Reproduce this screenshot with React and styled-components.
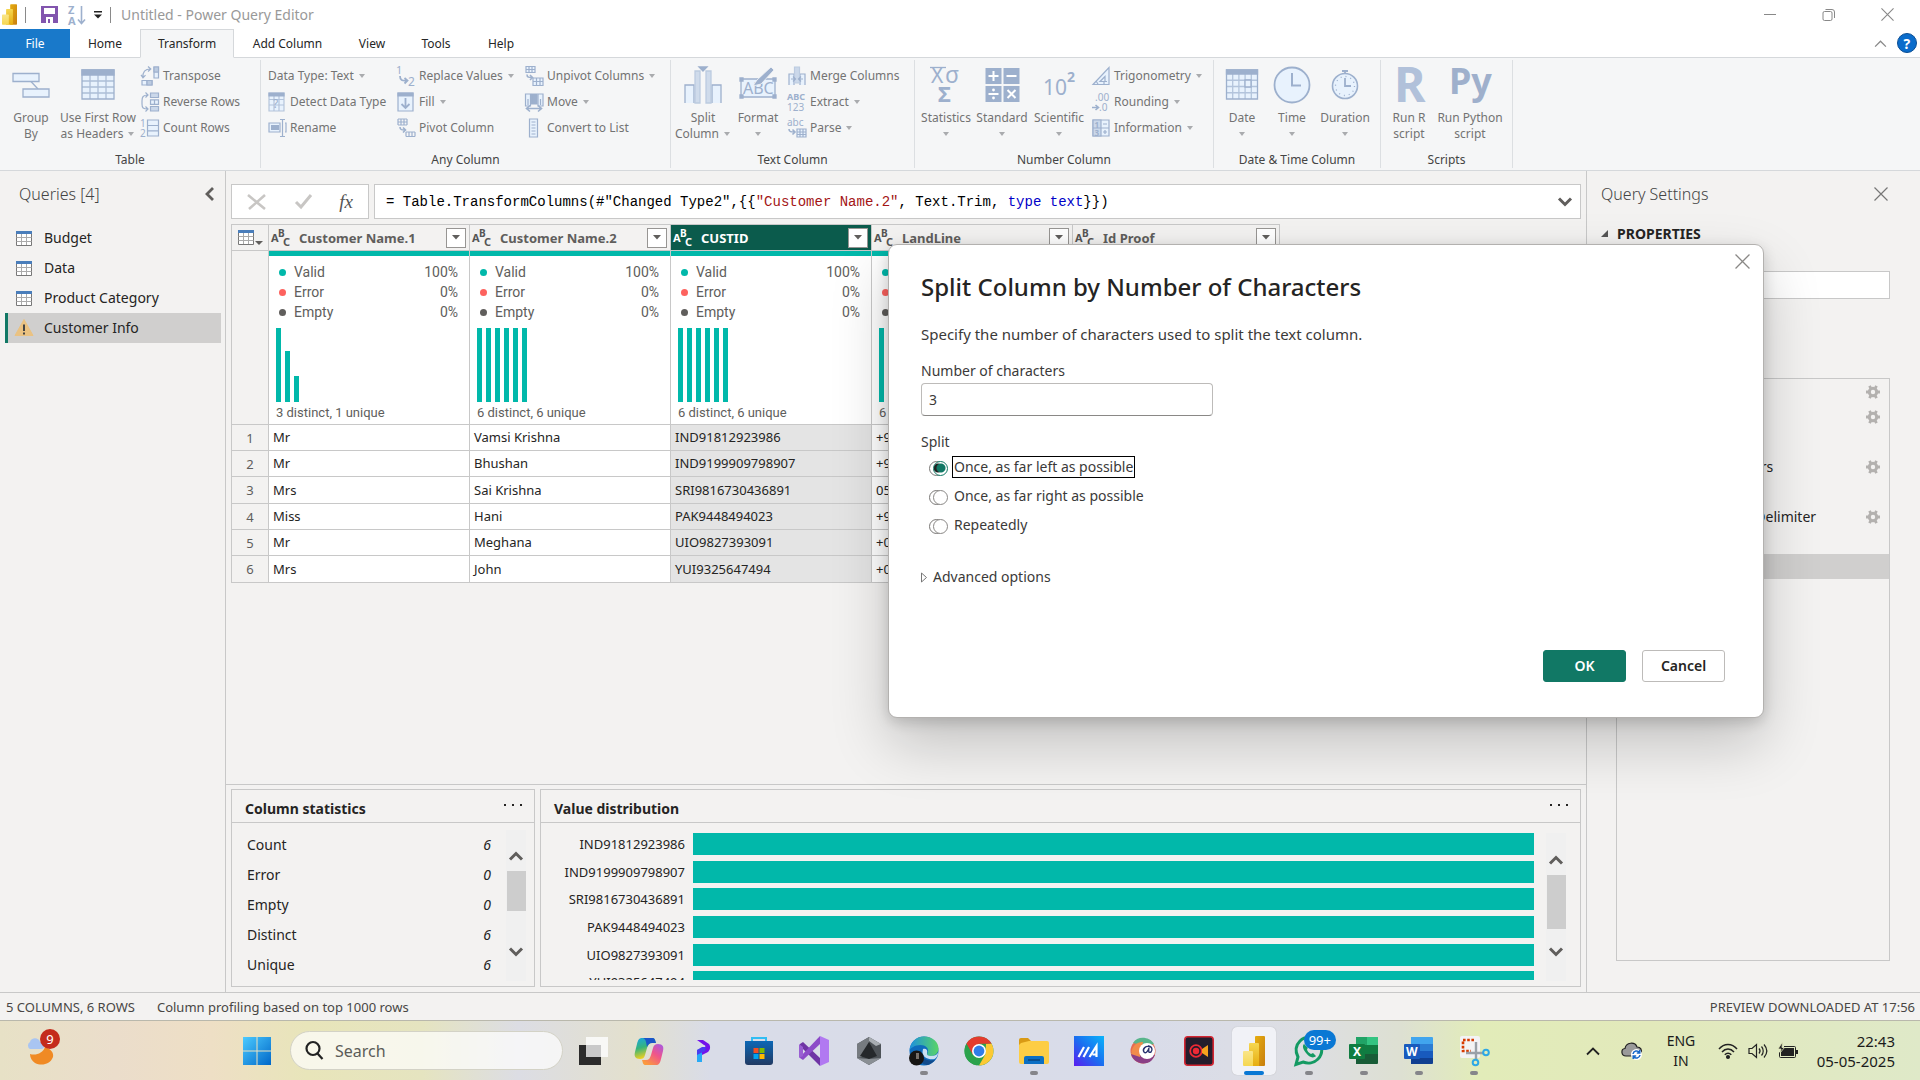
import React from "react";
import styled, { createGlobalStyle, css } from "styled-components";

const GlobalStyle = createGlobalStyle`
  *, *::before, *::after { box-sizing: border-box; }
  body { margin: 0; background: #f3f2f1; color: #252423; font: 14px/20px "Noto Sans", "Open Sans", sans-serif; }
  button, input { font: inherit; color: inherit; }
  button { border: 0; padding: 0; background: none; cursor: pointer; }
  svg { display: block; flex: none; overflow: visible; }
  ul { list-style: none; margin: 0; padding: 0; }
  h1, h2, h3, p { margin: 0; font: inherit; }
`;

const line = "#c8c8c8";
const teal = "#01b8aa";
const green = "#117865";
const ink = "#9db0cd";
const wash = "#e8f2fd";

/* ---------- shell ---------- */

const Shell = styled.div`
  position: relative;
  display: flex;
  flex-direction: column;
  min-height: 100vh;
  overflow: hidden;
`;

const TitleBar = styled.header`
  display: flex;
  align-items: center;
  height: 29px;
  padding: 0 26px 0 2px;
  background: #fff;
`;

const QuickAccess = styled.div`
  display: flex;
  align-items: center;
`;

const Divider = styled.span`
  width: 1px;
  height: 16px;
  margin: 0 ${(p) => p.$after}px 0 8px;
  background: #8a8a8a;
`;

const QuickButton = styled.button`
  margin-right: 10px;
`;

const WindowTitle = styled.h1`
  color: #999;
`;

const WindowButtons = styled.div`
  display: flex;
  gap: 45px;
  margin-left: auto;
`;

const TabBar = styled.nav`
  display: flex;
  align-items: stretch;
  height: 29px;
  padding-right: 3px;
  background: #fff;
  border-bottom: 1px solid #d5d8db;
  font-size: 12px;
`;

const Tab = styled.button`
  width: ${(p) => p.$width}px;
  height: 29px;
  color: #262626;
  border: 1px solid transparent;
  ${(p) => p.$file && css`background: #1979ca; color: #fff;`}
  ${(p) => p.$active && css`
    background: #f5f6f7;
    border-color: #d5d8db #d5d8db #f5f6f7;
  `}
`;

const TabTools = styled.div`
  display: flex;
  align-items: center;
  gap: 10px;
  margin-left: auto;
`;

/* ---------- ribbon ---------- */

const Ribbon = styled.div`
  display: flex;
  height: 113px;
  padding: 2px 0;
  background: #f5f6f7;
  border-bottom: 1px solid #d5d8db;
  color: #737373;
  font-size: 12px;
`;

const Group = styled.section`
  display: flex;
  flex-direction: column;
  width: ${(p) => p.$width}px;
  height: 108px;
  border-right: 1px solid #dcdfe2;
`;

const GroupBody = styled.div`
  display: flex;
  flex: 1;
  padding: 3px 0 0 3px;
`;

const GroupLabel = styled.h2`
  color: #444;
  line-height: 16px;
  text-align: center;
`;

const BigButton = styled.button`
  display: flex;
  flex-direction: column;
  align-items: center;
  width: ${(p) => p.$width}px;
  padding-top: 1px;
  line-height: 16px;
  white-space: nowrap;
`;

const BigIcon = styled.span`
  height: 46px;
`;

const CaretLine = styled.span`
  display: flex;
  align-items: center;
  justify-content: center;
  gap: 4px;
  min-height: 16px;
`;

const SmallColumn = styled.div`
  display: flex;
  flex-direction: column;
  width: ${(p) => p.$width}px;
  margin-left: 4px;
`;

const SmallButton = styled.button`
  display: flex;
  align-items: center;
  gap: 4px;
  height: 26px;
  white-space: nowrap;
`;

const Caret = () => (
  <svg width="8" height="5" viewBox="0 0 8 5"><path d="M1 0h6L4 4z" fill="#a9abae" /></svg>
);

const S = ({ children, w = 18 }) => (
  <svg width={w} height="20" viewBox={`0 0 ${w} 20`} fill="none" stroke={ink} strokeWidth="1.2" aria-hidden="true">{children}</svg>
);
const B = ({ children }) => (
  <svg width="40" height="40" viewBox="0 0 40 40" fill={wash} stroke={ink} strokeWidth="1.3" aria-hidden="true">{children}</svg>
);
const Glyph = ({ x, y, size, bold, children, fill = ink }) => (
  <text x={x} y={y} fontSize={size} fontWeight={bold ? 700 : 400} fill={fill} stroke="none" fontFamily="Noto Sans, sans-serif">{children}</text>
);

const small = {
  transpose: <S><path d="M13 1h4.500v11H13zM13 6h4.500M1 14.500h10V19H1zM6 14.500V19" fill={wash} /><path d="M13 1h4.500v5H13zM6 14.500h5V19H6z" fill="#bccbe0" /><path d="M2 11.500C1.500 6 4 3 9.500 3M7 .5 9.800 3 7 5.500M0 8.800l2 3 2.500-2.600" /></S>,
  reverse: <S><path d="M9.500 1h8v4.500h-8zM9.500 14.500h8V19h-8z" fill="#cbd8ea" /><path d="M9.500 7.800h8v4.500h-8zM13.500 7.800v4.500" fill={wash} /><path d="M7 3C2 3 1 5 1 9v3c0 4 1 5 6 5M4.500 .5 7 3 4.500 5.500M4.500 14.500 7 17l-2.500 2.500" /></S>,
  count: <S><path d="M6.500 2h11v16h-11zM6.500 7.500h11M6.500 12.800h11" fill={wash} /><Glyph x="-1" y="8.500" size="10">1</Glyph><Glyph x="-1" y="19" size="10">2</Glyph></S>,
  detect: <S><path d="M1 1h15v18H1zM1 7.500h15M1 13h15M6 3v16M11 3v16" fill={wash} strokeOpacity=".7" /><path d="M1 1h15v3H1z" fill={ink} /><Glyph x="5" y="16" size="12">?</Glyph></S>,
  rename: <S><path d="M1 5h11v9H1z" fill={wash} /><path d="M3 7h8v5H3z" fill={ink} stroke="none" /><path d="M12 1.500h5M12 18.500h5M14.500 1.500v17M17 5h1v9h-1" /></S>,
  replace: <S><Glyph x="-1" y="8" size="11">1</Glyph><Glyph x="11" y="19.500" size="12">2</Glyph><path d="M3 10c0 4 2 5 7 4.500M7.500 12l3 2.500-3 3" strokeWidth="1.800" /></S>,
  fill: <S><path d="M1 1h15v18H1z" fill={wash} /><path d="M1 1h15v3H1z" fill={ink} /><path d="M8.500 6v10M4.500 12l4 4 4-4" strokeWidth="1.800" /></S>,
  pivot: <S><path d="M1 1h9M1 4h9M1 7h9M1 1v6M4 1v6M7 1v6M10 1v6M9 14h9M9 18.500h9M9 14v4.500M12 14v4.500M15 14v4.500M18 14v4.500" /><path d="M3 9c0 3 2 3 5 3M6 9.500 8.500 12 6 14.500" strokeWidth="1.600" /></S>,
  unpivot: <S><path d="M1 .5h9v6H1zM1 3.500h9M4 .5v6M7 .5v6M8 12h10v7.500H8zM8 15.500h10M11.500 12v7.500M15 12v7.500" fill={wash} /><path d="M2 8.500c0 3 2 3 5 3M5 9l2.500 2.500L5 14" strokeWidth="1.600" /></S>,
  move: <S><path d="M.5 2h5v12h-5zM13 2h5v12h-5z" fill={wash} /><path d="M6.500 2h5.500v10H6.500z" fill={ink} /><path d="M3 7v6M15.500 7v6" /><path d="M2 16.500h14M5 13.500l-3.500 3L5 19.500M13 13.500l3.500 3-3.500 3" strokeWidth="1.600" /></S>,
  list: <S><path d="M4.500 1h8v18h-8z" fill={wash} /><path d="M6.500 4h4M6.500 7h4M6.500 10h4M6.500 13h4M6.500 16h4" /></S>,
  merge: <S><path d="M1 19V8h5v11M12 19V8h5v11" fill={wash} /><path d="M6.500 1h5v16h-5z" fill="#cbd8ea" stroke="#bccbe0" /><path d="M3 13h4M15 13h-4M5 10.500 7.500 13 5 15.500M13 10.500 10.500 13l2.500 2.500" /></S>,
  extract: <S><Glyph x="-1" y="8" size="9" bold>ABC</Glyph><Glyph x="-1" y="19" size="10">123</Glyph></S>,
  parse: <S><Glyph x="-1" y="8" size="10">abc</Glyph><path d="M9 11h9v8H9zM9 14h9M9 16.500h9M12 11v8M15 11v8" fill={wash} /><path d="M1 11c0 3 2 3 6 3M4.500 11.500 7 14l-2.500 2.500" strokeWidth="1.600" /></S>,
  trig: <S><path d="M1 18.500 17 1.500v17zM8 15.500l5-5v5zM4 15l2 3M12 18.500v-3h3" fill={wash} /></S>,
  rounding: <S><Glyph x="3" y="9" size="10">.00</Glyph><Glyph x="7" y="19" size="10">.0</Glyph><path d="M0 15.500h6M3.500 13 6.500 15.500l-3 2.500" strokeWidth="1.600" /></S>,
  info: <S><path d="M1 2h16v16H1z" fill={wash} /><path d="M1 2h8v16H1z" fill="#cbd8ea" /><path d="M1 10h16M11 6h4M11 14h4M13 12v4" /><Glyph x="2.500" y="9.500" size="8" bold>1</Glyph><Glyph x="2.500" y="17.500" size="8" bold>3</Glyph></S>,
};

const gridLines = (x, y, w, h, cols, rows) => {
  let d = "";
  for (let i = 1; i < cols; i++) d += `M${x + (w * i) / cols} ${y}v${h}`;
  for (let j = 1; j < rows; j++) d += `M${x} ${y + (h * j) / rows}h${w}`;
  return d;
};

const big = {
  group: <B><path d="M20 17.500 27 25" /><path d="M2 9.500h26v8H2zM12 25h26v8H12z" /></B>,
  header: <B><path d="M4 6h32v29H4z" /><path d={gridLines(4, 11, 32, 24, 4, 4)} strokeOpacity=".8" /><path d="M4 6h32v5H4z" fill={ink} /></B>,
  split: <B><path d="M2 39V21h9v18M29 39V21h9v18" /><path d="M12 7h5v32h-5zM23 7h5v32h-5z" fill="#cfdbeb" stroke="#bccbe0" /><path d="M16 3h8l-4 4z" fill={ink} /></B>,
  format: <B><path d="M3 15h34v18H3z" /><path d="M2 14h3v3H2zM35 14h3v3h-3zM2 31h3v3H2zM35 31h3v3h-3z" fill={ink} /><Glyph x="5" y="30" size="16">ABC</Glyph><path d="m15 22 4-6L33 3l3 3-13 14z" fill={ink} stroke="#f5f6f7" strokeWidth=".8" /></B>,
  stats: <B><Glyph x="5" y="19" size="21">X</Glyph><Glyph x="19" y="19" size="23">σ</Glyph><path d="M4 3.500h16" /><Glyph x="12" y="38" size="22" bold>Σ</Glyph></B>,
  standard: <B><path d="M3.500 4h16v16h-16zM21.500 4h16v16h-16zM3.500 22h16v16h-16zM21.500 22h16v16h-16z" fill={ink} stroke="none" /><path d="M6.500 12h10M11.500 7v10M24.500 12h10M6.500 30h10M25.500 26l8 8M33.500 26l-8 8" stroke="#fff" strokeWidth="2" /><circle cx="11.500" cy="26" r="1.400" fill="#fff" stroke="none" /><circle cx="11.500" cy="34" r="1.400" fill="#fff" stroke="none" /></B>,
  sci: <B><Glyph x="4" y="31" size="21">10</Glyph><Glyph x="28" y="18" size="14" bold>2</Glyph></B>,
  date: <B><path d="M4.500 6h31v29h-31z" /><path d={gridLines(4.5, 10, 31, 25, 5, 4)} strokeOpacity=".7" /><path d="M4.500 6h31v4h-31z" fill={ink} /><path d="M23 16h6v7h-6z" /></B>,
  time: <B><circle cx="20" cy="21" r="17.500" strokeWidth="1.800" /><path d="M20 9v12.500h9" fill="none" strokeWidth="2" /></B>,
  duration: <B><circle cx="20" cy="22" r="12.500" strokeWidth="1.600" /><path d="M20 14v8h6M17 7h6M20 7v3" fill="none" strokeWidth="1.800" /><circle cx="20" cy="22" r="9.500" fill="none" strokeDasharray="1 4" /></B>,
  r: <B><Glyph x="5" y="38" size="48" bold fill="#b1c1da">R</Glyph></B>,
  py: <B><Glyph x="-1" y="30" size="36" bold fill="#9fb0cc">Py</Glyph></B>,
};

const ribbon = [
  { label: "Table", width: 261, bigs: [["group", 56, ["Group", "By"]], ["header", 78, ["Use First Row", "as Headers"], 1]],
    cols: [[100, [["transpose", "Transpose"], ["reverse", "Reverse Rows"], ["count", "Count Rows"]]]] },
  { label: "Any Column", width: 410, cols: [
    [125, [[null, "Data Type: Text", 1], ["detect", "Detect Data Type"], ["rename", "Rename"]]],
    [124, [["replace", "Replace Values", 1], ["fill", "Fill", 1], ["pivot", "Pivot Column"]]],
    [130, [["unpivot", "Unpivot Columns", 1], ["move", "Move", 1], ["list", "Convert to List"]]]] },
  { label: "Text Column", width: 244, bigs: [["split", 58, ["Split", "Column"], 1], ["format", 52, ["Format"], 1]],
    cols: [[120, [["merge", "Merge Columns"], ["extract", "Extract", 1], ["parse", "Parse", 1]]]] },
  { label: "Number Column", width: 299, bigs: [["stats", 56, ["Statistics"], 1], ["standard", 56, ["Standard"], 1], ["sci", 58, ["Scientific"], 1]],
    cols: [[120, [["trig", "Trigonometry", 1], ["rounding", "Rounding", 1], ["info", "Information", 1]]]] },
  { label: "Date & Time Column", width: 167, bigs: [["date", 50, ["Date"], 1], ["time", 50, ["Time"], 1], ["duration", 56, ["Duration"], 1]] },
  { label: "Scripts", width: 132, bigs: [["r", 50, ["Run R", "script"]], ["py", 72, ["Run Python", "script"]]] },
];

/* ---------- main area ---------- */

const Main = styled.main`
  display: flex;
  flex: 1;
`;

const Queries = styled.aside`
  width: 226px;
  padding-left: 5px;
  border-right: 1px solid ${line};
`;

const PaneHeader = styled.div`
  display: flex;
  align-items: center;
  justify-content: space-between;
  height: 45px;
  padding: 0 ${(p) => p.$right}px 0 14px;
`;

const PaneTitle = styled.h2`
  color: #444;
  font-size: 16px;
  font-weight: 300;
`;

const QueryList = styled.ul`
  padding-top: 7px;
`;

const QueryItem = styled.li`
  display: flex;
  align-items: center;
  gap: 12px;
  width: 216px;
  height: 30px;
  padding-left: 8px;
  border-left: 3px solid ${(p) => (p.$active ? green : "transparent")};
  background: ${(p) => (p.$active ? "#d0cfce" : "transparent")};
`;

const Center = styled.section`
  display: flex;
  flex: 1;
  flex-direction: column;
  min-width: 0;
`;

const Workspace = styled.div`
  flex: 1;
  padding: 13px 5px 0 5px;
`;

const FormulaBar = styled.div`
  display: flex;
  gap: 5px;
  height: 35px;
`;

const FormulaTools = styled.div`
  display: flex;
  align-items: center;
  justify-content: space-between;
  width: 138px;
  padding: 0 15px;
  background: #fff;
  border: 1px solid ${line};
`;

const FxMark = styled.em`
  color: #555;
  font: italic 19px/20px "Liberation Serif", serif;
`;

const Formula = styled.div`
  display: flex;
  flex: 1;
  align-items: center;
  justify-content: space-between;
  padding: 0 8px 0 11px;
  background: #fff;
  border: 1px solid ${line};
  color: #000;
  white-space: pre;
`;

const Code = styled.code`
  font: 14px/20px "Liberation Mono", monospace;
`;

const Literal = styled.span`color: #a31515;`;
const Keyword = styled.span`color: #0000c8;`;

const Grid = styled.table`
  width: 1049px;
  margin-top: 5px;
  border-collapse: collapse;
  table-layout: fixed;
  font-size: 13px;
  th, td { padding: 0; border: 1px solid ${line}; text-align: left; }
`;

const HeadCell = styled.th`
  height: 26px;
  background: ${(p) => (p.$selected ? "#0b5b4c" : "#f3f2f1")};
  color: ${(p) => (p.$selected ? "#fff" : "#605e5c")};
`;

const HeadInner = styled.div`
  display: flex;
  align-items: center;
  height: 25px;
  padding: 0 3px 0 2px;
  gap: 8px;
`;

const FilterButton = styled.button`
  display: grid;
  place-items: center;
  width: 20px;
  height: 20px;
  margin-left: auto;
  background: #fff;
  border: 1px solid #979593;
`;

const ProfileCell = styled.td`
  height: 174px;
  background: #fff;
  vertical-align: top;
`;

const Quality = styled.div`
  height: 173px;
  padding: 6px 11px 0 7px;
  border-top: 5px solid ${teal};
  color: #605e5c;
  font: 14px/20px Roboto, sans-serif;
`;

const QualityRow = styled.div`
  display: flex;
  align-items: center;
  gap: 8px;
  height: 20px;
  padding-left: 3px;
`;

const Dot = styled.span`
  width: 7px;
  height: 7px;
  border-radius: 50%;
  background: ${(p) => p.$color};
`;

const Percent = styled.span`margin-left: auto;`;

const Bars = styled.div`
  display: flex;
  align-items: flex-end;
  gap: 4px;
  height: 80px;
`;

const Bar = styled.span`
  width: 5px;
  background: ${teal};
`;

const Distinct = styled.div`
  font-size: 13px;
  line-height: 22px;
`;

const Cell = styled.td`
  background: ${(p) => (p.$selected ? "#e4e4e4" : "#fff")};
  color: #252423;
`;

const CellText = styled.div`
  height: 25px;
  padding-left: 4px;
  line-height: 24px;
  white-space: nowrap;
`;

const DataRow = styled.tr`
  height: 26px;
  &:nth-child(3n) { height: 27px; }
`;

const IndexCell = styled.th`
  background: #f3f2f1;
  color: #605e5c;
  && { font-weight: 400; text-align: center; }
`;

const Profiles = styled.div`
  display: flex;
  gap: 5px;
  height: 208px;
  padding: 4px 5px 5px;
  border-top: 1px solid ${line};
`;

const Card = styled.section`
  display: flex;
  flex-direction: column;
  ${(p) => (p.$width ? css`width: ${p.$width}px;` : css`flex: 1;`)}
  border: 1px solid ${line};
`;

const CardHead = styled.div`
  display: flex;
  align-items: center;
  justify-content: space-between;
  height: 33px;
  padding: 5px 11px 0 13px;
  border-bottom: 1px solid ${line};
  font-weight: 700;
`;

const MoreButton = styled.button`
  padding-bottom: 7px;
`;

const CardBody = styled.div`
  display: flex;
  flex: 1;
  gap: 12px;
  padding: ${(p) => p.$top}px ${(p) => p.$right}px 5px 15px;
`;

const StatList = styled.ul`
  flex: 1;
  padding-right: 3px;
  li { display: flex; justify-content: space-between; line-height: 30px; }
  em { color: #252423; }
`;

const Scroller = styled.div`
  display: flex;
  flex-direction: column;
  align-items: center;
  width: 20px;
  padding-top: ${(p) => p.$pad}px;
  background: #f0f0f0;
`;

const Thumb = styled.span`
  width: 19px;
  height: ${(p) => p.$height}px;
  margin: 10px 0 ${(p) => p.$after}px;
  background: #cdcdcd;
`;

const Distribution = styled.div`
  flex: 1;
  height: 147px;
  overflow: hidden;
`;

const DistributionRows = styled.ul`
  display: grid;
  grid-template-rows: repeat(6, 1fr);
  height: 166px;
  li { display: flex; align-items: flex-start; gap: 8px; }
`;

const BarLabel = styled.span`
  width: 129px;
  font-size: 13px;
  line-height: 22px;
  text-align: right;
`;

const WideBar = styled.span`
  flex: 1;
  height: 22px;
  background: ${teal};
`;

const Settings = styled.aside`
  display: flex;
  flex-direction: column;
  width: 334px;
  padding-bottom: 31px;
  border-left: 1px solid ${line};
`;

const SectionTitle = styled.h3`
  display: flex;
  align-items: center;
  gap: 9px;
  height: 35px;
  padding-left: 14px;
  font-weight: 700;
`;

const NameInput = styled.input`
  height: 28px;
  margin: 20px 30px 79px 29px;
  padding: 0 6px;
  background: #fff;
  border: 1px solid ${line};
`;

const StepList = styled.ul`
  flex: 1;
  margin: 0 30px 0 29px;
  border: 1px solid ${line};
`;

const Step = styled.li`
  display: flex;
  align-items: center;
  justify-content: space-between;
  height: 25px;
  padding: 0 9px 0 32px;
  background: ${(p) => (p.$active ? "#d0cfce" : "transparent")};
`;

const StepGear = styled.button`
  margin-left: auto;
`;

const StatusBar = styled.footer`
  display: flex;
  gap: 22px;
  height: 28px;
  padding: 0 5px 0 6px;
  border-top: 1px solid ${line};
  color: #484644;
  font-size: 13px;
  line-height: 28px;
`;

const StatusRight = styled.span`margin-left: auto;`;

/* ---------- dialog ---------- */

const Dialog = styled.form`
  position: absolute;
  top: 244px;
  right: 156px;
  display: flex;
  flex-direction: column;
  width: 876px;
  height: 474px;
  padding: 25px 38px 35px 32px;
  background: #fff;
  border: 1px solid #b3b1af;
  border-radius: 9px;
  box-shadow: 0 26px 58px rgba(0, 0, 0, 0.2), 0 4px 14px rgba(0, 0, 0, 0.16);
  color: #3b3a39;
`;

const DialogClose = styled.button`
  position: absolute;
  top: 9px;
  right: 13px;
`;

const DialogTitle = styled.h2`
  color: #252423;
  font-size: 24px;
  font-weight: 500;
  line-height: 34px;
`;

const DialogText = styled.p`
  margin-top: 18px;
  font-size: 15px;
  line-height: 24px;
`;

const FieldLabel = styled.label`
  margin-top: 15px;
`;

const NumberInput = styled.input`
  width: 292px;
  height: 33px;
  margin: 2px 0 16px;
  padding: 0 7px;
  border: 1px solid #bdbbb9;
  border-bottom-color: #8a8886;
  border-radius: 4px;
`;

const Options = styled.fieldset`
  margin: 0;
  padding: 0 0 0 8px;
  border: 0;
`;

const Legend = styled.legend`
  margin-left: -8px;
  padding: 0;
`;

const Option = styled.label`
  display: flex;
  align-items: center;
  gap: 4px;
  height: 29px;
`;

const OptionText = styled.span`
  padding: 0 1px;
  border: 1px solid ${(p) => (p.$focused ? "#000" : "transparent")};
`;

const Radio = styled.input`
  appearance: none;
  position: relative;
  width: 19px;
  height: 15px;
  margin: 3px 0 0;
  &::before, &::after {
    content: "";
    position: absolute;
    top: 0;
    width: 15px;
    height: 15px;
    border: 1px solid #7a7876;
    border-radius: 50%;
  }
  &::before { left: 0; }
  &::after { left: 4px; border-color: #8a8886; background: #fff; }
  &:checked::after {
    border-color: ${green};
    background:
      radial-gradient(circle at 7px 6px, ${green} 0 4px, transparent 5px),
      radial-gradient(circle at 4px 6px, #222 0 4px, transparent 5px), #fff;
  }
`;

const Advanced = styled.button`
  display: flex;
  align-items: center;
  gap: 6px;
  margin-top: 28px;
  align-self: flex-start;
`;

const Actions = styled.div`
  display: flex;
  justify-content: flex-end;
  gap: 16px;
  margin-top: auto;
`;

const ActionButton = styled.button`
  width: 83px;
  height: 32px;
  border: 1px solid ${(p) => (p.$primary ? green : "#bdbbb9")};
  border-radius: 3px;
  background: ${(p) => (p.$primary ? green : "#fff")};
  color: ${(p) => (p.$primary ? "#fff" : "#252423")};
  font-weight: 600;
`;

/* ---------- taskbar ---------- */

const Taskbar = styled.footer`
  display: flex;
  align-items: center;
  gap: 11px;
  height: 60px;
  padding: 0 25px 0 19px;
  border-top: 1px solid #b9b8ac;
  background: linear-gradient(90deg, #e7e1c6 0%, #ebddcb 6%, #eedfc5 11%, #e8e5ba 16%, #e5e4c0 22%, #dcdde4 27%, #e3e0cd 33%, #d9dce8 37%, #d9dce9 60%, #dddee3 68%, #dde0d2 73%, #e2ecb9 77%, #e2e9bb 86%, #dfe9c8 100%);
  color: #1b1b1b;
`;

const TaskButton = styled.button`
  display: flex;
  position: relative;
  align-items: center;
  justify-content: center;
  width: 44px;
  height: 48px;
  border-radius: 5px;
  ${(p) => p.$active && css`background: #f1f2f7; box-shadow: 0 0 1px #aaa;`}
  ${(p) => p.$running && css`
    &::after {
      content: "";
      position: absolute;
      bottom: 0;
      width: ${p.$active ? 20 : 8}px;
      height: 4px;
      border-radius: 2px;
      background: ${p.$active ? "#0a78d4" : "#85858a"};
    }
  `}
`;

const Weather = styled(TaskButton)`
  margin-right: 161px;
`;

const Badge = styled.span`
  position: absolute;
  top: ${(p) => (p.$blue ? 3 : 2)}px;
  right: ${(p) => (p.$blue ? -5 : 3)}px;
  min-width: 20px;
  padding: 0 ${(p) => (p.$blue ? 5 : 0)}px;
  border-radius: 10px;
  background: ${(p) => (p.$blue ? "#0a78d4" : "#c42b1c")};
  color: #fff;
  font-size: 13px;
  line-height: 20px;
  text-align: center;
`;

const SearchBox = styled.label`
  display: flex;
  align-items: center;
  gap: 12px;
  width: 273px;
  height: 39px;
  margin-right: -2px;
  padding: 0 14px;
  border: 1px solid #d3d2c6;
  border-radius: 20px;
  background: rgba(255, 255, 255, 0.7);
`;

const SearchInput = styled.input`
  width: 180px;
  padding: 0;
  border: 0;
  outline: 0;
  background: none;
  font-size: 16px;
  &::placeholder { color: #5c5c58; opacity: 1; }
`;

const Tray = styled.div`
  display: flex;
  align-items: center;
  margin-left: auto;
`;

const TrayText = styled.div`
  width: ${(p) => p.$width}px;
  margin-right: ${(p) => p.$after}px;
  font-size: ${(p) => p.$size}px;
  text-align: ${(p) => p.$align};
`;

const TrayButton = styled.button`
  margin-right: ${(p) => p.$after}px;
`;

/* ---------- small drawings ---------- */

const PowerBi = ({ w, h }) => (
  <svg width={w} height={h} viewBox="0 0 22 30">
    <defs>
      <linearGradient id="pb1" x2="1" y2="1"><stop stopColor="#e6ad10" /><stop offset="1" stopColor="#c87e0e" /></linearGradient>
      <linearGradient id="pb2" x2="0" y2="1"><stop stopColor="#f6d751" /><stop offset="1" stopColor="#e6ad10" /></linearGradient>
      <linearGradient id="pb3" x2="0" y2="1"><stop stopColor="#f9e589" /><stop offset="1" stopColor="#f6d751" /></linearGradient>
    </defs>
    <path d="M12 1a1 1 0 0 1 1-1h8a1 1 0 0 1 1 1v28a1 1 0 0 1-1 1h-9z" fill="url(#pb1)" />
    <path d="M6 8a1 1 0 0 1 1-1h8a1 1 0 0 1 1 1v22H6z" fill="url(#pb2)" />
    <path d="M0 16a1 1 0 0 1 1-1h8a1 1 0 0 1 1 1v14H1a1 1 0 0 1-1-1z" fill="url(#pb3)" />
  </svg>
);
const Cross = ({ size, color = "#767676", width = 1.2 }) => (
  <svg width={size} height={size} viewBox="0 0 14 14" stroke={color} strokeWidth={width}><path d="m.5.5 13 13M13.500.5l-13 13" /></svg>
);
const Chevron = ({ d, w = 14, h = 10, color = "#605e5c", width = 3 }) => (
  <svg width={w} height={h} viewBox="0 0 14 10" fill="none" stroke={color} strokeWidth={width}><path d={d} /></svg>
);
const up = "m1 8.500 6-6 6 6";
const down = "m1 1.500 6 6 6-6";
const TableGlyph = () => (
  <svg width="16" height="15" viewBox="0 0 16 15"><path d="M.5.5h15v14H.5z" fill="#fff" stroke="#777" /><path d="M.5 6.500h15M.5 10.500h15M5.500 3v11M10.500 3v11" stroke="#aaa" /><path d="M0 0h16v3H0z" fill="#4a7ebb" /></svg>
);
const Abc = ({ color }) => (
  <svg width="20" height="18" viewBox="0 0 20 18"><Glyph x="0" y="13" size="11" bold fill={color}>A</Glyph><Glyph x="7" y="8" size="10" bold fill={color}>B</Glyph><Glyph x="12" y="17" size="11" bold fill={color}>C</Glyph></svg>
);
const Gear = () => (
  <svg width="14" height="14" viewBox="0 0 14 14" fill="none" stroke="#b3b1af"><circle cx="7" cy="7" r="3.700" strokeWidth="3" /><g strokeWidth="2.800"><path d="M0 7h2.500M11.500 7H14M3.500 .9l1.200 2.200M9.300 10.900l1.200 2.200M10.500 .9 9.300 3.100M4.700 10.900l-1.200 2.200" /></g></svg>
);
const Dots = () => (
  <svg width="19" height="4" viewBox="0 0 19 4" fill="#252423"><path d="M0 1h2v2H0zM8 1h2v2H8zM16 1h2v2h-2z" /></svg>
);

const TaskSvg = ({ children }) => <svg width="30" height="30" viewBox="0 0 30 30" aria-hidden="true">{children}</svg>;

const apps = [
  ["Task view", <TaskSvg><path d="M0 9h22v20H0z" fill="#2b2b2b" /><path d="M7 1h22v20H7z" fill="#fbfbfb" fillOpacity=".86" /><path d="M7 9h15v12H7z" fill="#c9c9c9" /></TaskSvg>],
  ["Copilot", <TaskSvg><defs><linearGradient id="cpa" x2=".3" y2="1"><stop stopColor="#18a5e8" /><stop offset=".5" stopColor="#36b47b" /><stop offset="1" stopColor="#f5d11d" /></linearGradient><linearGradient id="cpb" x1="1" x2=".3" y2="1"><stop stopColor="#a35ae8" /><stop offset=".5" stopColor="#f0548a" /><stop offset="1" stopColor="#fb9a3e" /></linearGradient></defs><path d="M8 2h10c3 0 3 2 4 5h-4c-3 0-4 2-5 5l-2 7c-1 3-2 4-5 4-5 0-6-3-5-7l2-8c1-4 2-6 5-6z" fill="url(#cpa)" /><path d="M9 2h9c3 0 3 2 4 5h-4c-3 0-4 2-5 4-1-5-1-8-4-9z" fill="#1b55c9" /><path d="M22 29H12c-3 0-3-2-4-5h4c3 0 4-2 5-5l2-7c1-3 2-4 5-4 5 0 6 3 5 7l-2 8c-1 4-2 6-5 6z" fill="url(#cpb)" /></TaskSvg>],
  ["Planner", <TaskSvg><path d="M8 4h6l6 4c2 3 1 6-1 8l-6 3v-5l3-3c1-1 0-2-1-2z" fill="#7412ea" /><path d="M8 14l5-2v14H8z" fill="#27aaf5" /><path d="m8 14 5-3h4l-1 4-8 4z" fill="#4a3cf0" /></TaskSvg>],
  ["Store", <TaskSvg><defs><linearGradient id="sto" x2="0" y2="1"><stop stopColor="#0c67b5" /><stop offset="1" stopColor="#213a63" /></linearGradient></defs><path d="M8 6V2h14v4" fill="none" stroke="#31bdf3" strokeWidth="2" /><path d="M1 5h28v21a3 3 0 0 1-3 3H4a3 3 0 0 1-3-3z" fill="url(#sto)" /><path d="M9.500 12h5v5h-5z" fill="#f25022" /><path d="M15.500 12h5v5h-5z" fill="#7fba00" /><path d="M9.500 18h5v5h-5z" fill="#00a4ef" /><path d="M15.500 18h5v5h-5z" fill="#ffb900" /></TaskSvg>],
  ["Visual Studio", <TaskSvg><path d="m21 0 9 4v22l-9 4z" fill="#b179f1" /><path d="M1 8 4 6l17 16v8L1 10z" fill="#6f35a5" /><path d="M1 21 21 0v8L4 24l-3-2z" fill="#8c4bc8" /><path d="M0 8l4 3v9l-4 2z" fill="#9a5fd3" /></TaskSvg>],
  ["Unity Hub", <TaskSvg><path d="m15 1 12 7v14l-12 7-12-7V8z" fill="#4e5358" /><path d="m15 1 12 7-5 2-7-5z" fill="#a8adb2" /><path d="m3 8 12-7v5L8 21l-5 1z" fill="#767b80" /><path d="m15 6 8 14-8 3-9-3z" fill="#25282b" /><path d="M3 22l12 1 12-1-12 7z" fill="#8a8f94" /></TaskSvg>],
  ["Edge", <TaskSvg><defs><linearGradient id="edg" x2="1"><stop stopColor="#1c8fe0" /><stop offset="1" stopColor="#58d467" /></linearGradient></defs><circle cx="15" cy="15" r="14.500" fill="#0f6cbd" /><path d="M.5 15C1 6 7 .5 15 .5c9 0 14.500 6 14.500 12 0 5-4 7.500-8 7.500-3 0-4-1-3-3 2-5-2-8-7-8-6 0-10 3-11.500 6z" fill="url(#edg)" /><path d="M12 14c-1 7 5 12 14 10-2 2-4 4-7 5-8 0-12-9-7-15z" fill="#114a8b" /><path d="M14 13c3-1 5 1 4 4-.5 2 1 3 4 3 3 0 6-1 7.500-4-1 4-2 6-4 7-5 1-12-1-12-7z" fill="#eaf3fb" fillOpacity=".85" /><circle cx="7.500" cy="22" r="7.500" fill="#171513" /><path d="M7 17h3v6H7z" fill="#77706a" /></TaskSvg>, 1],
  ["Chrome", <TaskSvg><circle cx="15" cy="15" r="14.500" fill="#2ba24c" /><path d="M15 .5a14.500 14.500 0 0 1 12.600 7.300H15L8.800 19 2.400 7.800A14.500 14.500 0 0 1 15 .5z" fill="#e33b2e" /><path d="M27.600 7.800A14.500 14.500 0 0 1 15 29.500l6.300-11L22 8z" fill="#fcc934" /><path d="M2.400 7.800 8.800 19l6.200 3 1 1-3.500 6.300A14.500 14.500 0 0 1 2.400 7.800z" fill="#2ba24c" /><circle cx="15" cy="15" r="7" fill="#fff" /><circle cx="15" cy="15" r="5.400" fill="#2f7de9" /></TaskSvg>],
  ["File Explorer", <TaskSvg><path d="M0 4a2 2 0 0 1 2-2h7l3 3v6H0z" fill="#d99a15" /><path d="M0 9 2 7l8-2h18a2 2 0 0 1 2 2v19a2 2 0 0 1-2 2H2a2 2 0 0 1-2-2z" fill="#fdcd45" /><path d="M5 28v-6a2 2 0 0 1 2-2h16a2 2 0 0 1 2 2v6z" fill="#0c6fc4" /><path d="M9 24h12" stroke="#0a4f8f" strokeWidth="2" /></TaskSvg>, 1],
  ["Movavi", <TaskSvg><defs><linearGradient id="mov" x1="0" x2="1" y1="1" y2="0"><stop stopColor="#5a1cf0" /><stop offset=".5" stopColor="#1a6ff0" /><stop offset="1" stopColor="#0ab4fa" /></linearGradient></defs><path d="M0 0h30v30H0z" fill="url(#mov)" /><path d="m4.500 21 5.500-10M9.500 21 15 11M15.500 21 22.500 10v11M18.500 18.500h4" fill="none" stroke="#fff" strokeWidth="2.200" /></TaskSvg>],
  ["Browser", <TaskSvg><circle cx="14" cy="15" r="12.500" fill="#e66b52" /><path d="M4 7C8 0 20 0 25 8l-8 2z" fill="#58b58b" /><path d="M2 16c0 8 8 13 16 11 4-1 6-4 8-8l-14-2z" fill="#8a3f86" /><path d="M2 18c1-8 5-12 12-12l-3 15z" fill="#f18c4a" /><circle cx="18" cy="15" r="8" fill="#fff" /><path d="M21 11c-4-2-8 2-6 5 1 2 4 0 5-4-1 4 0 5 2 4 2-2 1-6-3-6" fill="none" stroke="#26306e" strokeWidth="1.400" /></TaskSvg>],
  ["Recorder", <TaskSvg><rect x=".8" y=".8" width="28.400" height="28.400" rx="3" fill="#241d2c" stroke="#d32531" strokeWidth="1.600" /><circle cx="12" cy="15" r="5.800" fill="none" stroke="#ee2a35" strokeWidth="1.800" /><circle cx="12" cy="15" r="3.200" fill="#ee2a35" /><path d="m18 13 6-4v12l-6-4z" fill="#f6a21e" /></TaskSvg>],
  ["Power BI Desktop", <PowerBi w={22} h={30} />, 1, 1],
  ["WhatsApp", <TaskSvg><path d="M2 28.500 4 21C1 15 2 9 6 5c5-5 13-5 18 0s5 13 0 18c-4 4-10 5-15 3z" fill="none" stroke="#149a63" strokeWidth="3" /><path d="M10 8c-2 2-1 5 2 9s7 6 10 3l-3-3-2 1c-2-1-4-3-4-5l1-1z" fill="#149a63" /></TaskSvg>, 1],
  ["Excel", <TaskSvg><path d="M7 1h21a1 1 0 0 1 1 1v7H7z" fill="#21a366" /><path d="M18 1h10a1 1 0 0 1 1 1v7H18z" fill="#33c481" /><path d="M7 9h22v9H7z" fill="#107c41" /><path d="M7 18h22v9a1 1 0 0 1-1 1H7z" fill="#185c37" /><rect y="8" width="16" height="15" rx="1" fill="#107c41" /><Glyph x="4" y="20" size="12" bold fill="#fff">X</Glyph></TaskSvg>, 1],
  ["Word", <TaskSvg><path d="M7 1h21a1 1 0 0 1 1 1v6H7z" fill="#41a5ee" /><path d="M7 8h22v7H7z" fill="#2b7cd3" /><path d="M7 15h22v7H7z" fill="#185abd" /><path d="M7 22h22v5a1 1 0 0 1-1 1H7z" fill="#103f91" /><rect y="8" width="16" height="15" rx="1" fill="#185abd" /><Glyph x="2" y="20" size="12" bold fill="#fff">W</Glyph></TaskSvg>, 1],
  ["Snipping Tool", <TaskSvg><rect x="1" width="20" height="22" rx="2" fill="#f3f3f5" /><path d="M15 4H4v11h8" fill="none" stroke="#d83b01" strokeWidth="2.600" strokeDasharray="2.600 1.600" /><path d="M17 6v17M7 17h18" fill="none" stroke="#9aa0a8" strokeWidth="2.400" /><circle cx="16.500" cy="26.500" r="2.800" fill="none" stroke="#2ea8e5" strokeWidth="2" /><circle cx="27" cy="16.500" r="2.800" fill="none" stroke="#2ea8e5" strokeWidth="2" /></TaskSvg>, 1],
];

/* ---------- data ---------- */

const tabs = [["File", 70], ["Home", 70], ["Transform", 94], ["Add Column", 107], ["View", 62], ["Tools", 66], ["Help", 64]];
const fullQuality = [["Valid", "100%"], ["Error", "0%"], ["Empty", "0%"]];
const six = [74, 74, 74, 74, 74, 74];
const columns = [
  ["Customer Name.1", "3 distinct, 1 unique", [74, 51, 26], fullQuality],
  ["Customer Name.2", "6 distinct, 6 unique", six, fullQuality],
  ["CUSTID", "6 distinct, 6 unique", six, fullQuality],
  ["LandLine", "6", six, [[], [], []]],
  ["Id Proof", "", six, [[], [], []]],
];
const rows = [
  ["Mr", "Vamsi Krishna", "IND91812923986", "+9", ""],
  ["Mr", "Bhushan", "IND9199909798907", "+9", ""],
  ["Mrs", "Sai Krishna", "SRI9816730436891", "05", ""],
  ["Miss", "Hani", "PAK9448494023", "+9", ""],
  ["Mr", "Meghana", "UIO9827393091", "+0", ""],
  ["Mrs", "John", "YUI9325647494", "+0", ""],
];
const stats = [["Count", 6], ["Error", 0], ["Empty", 0], ["Distinct", 6], ["Unique", 6]];
const steps = [["", 1], ["", 1], [""], ["Promoted Headers", 1], [""], ["Split Column by Delimiter", 1], [""], ["", 0, 1]];
const qualityColors = [teal, "#fd625e", "#605e5c"];
const splitModes = ["Once, as far left as possible", "Once, as far right as possible", "Repeatedly"];

export default function App() {
  return (
    <Shell>
      <GlobalStyle />
      <TitleBar>
        <QuickAccess>
          <PowerBi w={15} h={21} />
          <Divider $after={15} />
          <QuickButton aria-label="Save">
            <svg width="17" height="17" viewBox="0 0 17 17"><path d="M0 0h17v17H0z" fill="#8255ae" /><path d="M3 2h11v6H3zM5 11h7v6H5z" fill="#fff" /><path d="M7 13h2v4H7z" fill="#8255ae" /></svg>
          </QuickButton>
          <QuickButton aria-label="Sort">
            <svg width="16" height="20" viewBox="0 0 16 20" fill="none" stroke={ink}><Glyph x="0" y="9" size="11" bold>Z</Glyph><Glyph x="0" y="20" size="11" bold>A</Glyph><path d="M13.500 1v17M10 14.500l3.500 4 3.500-4" strokeWidth="1.600" /></svg>
          </QuickButton>
          <button aria-label="Customize toolbar">
            <svg width="8" height="8" viewBox="0 0 8 8"><path d="M0 0h8v1.500H0zM0 3.500h8l-4 4z" fill="#222" /></svg>
          </button>
          <Divider $after={10} />
        </QuickAccess>
        <WindowTitle>Untitled - Power Query Editor</WindowTitle>
        <WindowButtons>
          <button aria-label="Minimize"><svg width="14" height="14" viewBox="0 0 14 14"><path d="M1 6.500h12" stroke="#888" /></svg></button>
          <button aria-label="Restore"><svg width="14" height="14" viewBox="0 0 14 14" fill="none" stroke="#888"><rect x="1" y="3.500" width="9" height="9" rx="1.500" /><path d="M3.500 1.500H10a2.500 2.500 0 0 1 2.500 2.500v6" /></svg></button>
          <button aria-label="Close"><Cross size={13} color="#888" /></button>
        </WindowButtons>
      </TitleBar>

      <TabBar>
        {tabs.map(([name, width], i) => (
          <Tab key={name} $width={width} $file={i === 0} $active={i === 2}>{name}</Tab>
        ))}
        <TabTools>
          <button aria-label="Collapse ribbon"><Chevron d={up} w={13} h={9} color="#888" width={1.4} /></button>
          <button aria-label="Help center">
            <svg width="20" height="20" viewBox="0 0 20 20"><circle cx="10" cy="10" r="9.500" fill="#0a6ccb" stroke="#0b4e94" /><Glyph x="6.500" y="15.500" size="14" bold fill="#fff">?</Glyph></svg>
          </button>
        </TabTools>
      </TabBar>

      <Ribbon>
        {ribbon.map((g) => (
          <Group key={g.label} $width={g.width}>
            <GroupBody>
              {(g.bigs || []).map(([icon, width, lines, caret]) => (
                <BigButton key={icon} $width={width}>
                  <BigIcon>{big[icon]}</BigIcon>
                  <span>{lines[0]}</span>
                  <CaretLine>{lines[1]}{caret && <Caret />}</CaretLine>
                </BigButton>
              ))}
              {(g.cols || []).map(([width, items], i) => (
                <SmallColumn key={i} $width={width}>
                  {items.map(([icon, text, caret]) => (
                    <SmallButton key={text}>{icon && small[icon]}{text}{caret && <Caret />}</SmallButton>
                  ))}
                </SmallColumn>
              ))}
            </GroupBody>
            <GroupLabel>{g.label}</GroupLabel>
          </Group>
        ))}
      </Ribbon>

      <Main>
        <Queries>
          <PaneHeader $right={11}>
            <PaneTitle>Queries [4]</PaneTitle>
            <button aria-label="Collapse queries">
              <svg width="9" height="14" viewBox="0 0 9 14" fill="none" stroke="#605e5c" strokeWidth="2.800"><path d="M8 1 2 7l6 6" /></svg>
            </button>
          </PaneHeader>
          <QueryList>
            {["Budget", "Data", "Product Category"].map((q) => (
              <QueryItem key={q}><TableGlyph />{q}</QueryItem>
            ))}
            <QueryItem $active>
              <svg width="16" height="16" viewBox="0 0 16 16"><path d="M8-.5 17 15.500H-1z" fill="#eac282" stroke="#eac282" strokeLinejoin="round" /><path d="M8 4.500v6.500M8 12.500v2" stroke="#444" strokeWidth="2" /></svg>
              Customer Info
            </QueryItem>
          </QueryList>
        </Queries>

        <Center>
          <Workspace>
            <FormulaBar>
              <FormulaTools>
                <button aria-label="Discard"><svg width="20" height="16" viewBox="0 0 20 16" stroke="#c8c6c4" strokeWidth="2.600"><path d="m1 1 17 14M18 1 2 15" /></svg></button>
                <button aria-label="Apply"><svg width="17" height="15" viewBox="0 0 17 15" fill="none" stroke="#c8c6c4" strokeWidth="3"><path d="m1 8 5 5L16 1" /></svg></button>
                <FxMark>fx</FxMark>
              </FormulaTools>
              <Formula>
                <Code>= Table.TransformColumns(#"Changed Type2",{"{{"}<Literal>"Customer Name.2"</Literal>, Text.Trim, <Keyword>type</Keyword> <Keyword>text</Keyword>{"}})"}</Code>
                <button aria-label="Expand formula"><Chevron d={down} /></button>
              </Formula>
            </FormulaBar>

            <Grid>
              <colgroup>
                <col width="37" /><col width="201" /><col width="201" /><col width="201" /><col width="201" /><col width="207" />
              </colgroup>
              <thead>
                <tr>
                  <HeadCell>
                    <HeadInner>
                      <svg width="32" height="16" viewBox="-4 0 32 16"><path d="M.5.5h15v14H.5z" fill="#fff" stroke="#777" /><path d="M.5 6.500h15M.5 10.500h15M5.500 3v11M10.500 3v11" stroke="#aaa" /><path d="M0 0h16v3H0z" fill="#4a7ebb" /><path d="M17 11h8l-4 4z" fill="#605e5c" /></svg>
                    </HeadInner>
                  </HeadCell>
                  {columns.map(([name], i) => (
                    <HeadCell key={name} $selected={i === 2}>
                      <HeadInner>
                        <Abc color={i === 2 ? "#fff" : "#555"} />
                        {name}
                        <FilterButton aria-label={`Filter ${name}`}><svg width="8" height="5" viewBox="0 0 8 5"><path d="M0 0h8L4 4.500z" fill="#605e5c" /></svg></FilterButton>
                      </HeadInner>
                    </HeadCell>
                  ))}
                </tr>
                <tr>
                  <IndexCell as="td" />
                  {columns.map(([name, summary, bars, quality]) => (
                    <ProfileCell key={name}>
                      <Quality>
                        {quality.map(([label, value], i) => (
                          <QualityRow key={i}><Dot $color={qualityColors[i]} />{label}<Percent>{value}</Percent></QualityRow>
                        ))}
                        <Bars>{bars.map((h, i) => <Bar key={i} style={{ height: h }} />)}</Bars>
                        <Distinct>{summary}</Distinct>
                      </Quality>
                    </ProfileCell>
                  ))}
                </tr>
              </thead>
              <tbody>
                {rows.map((row, r) => (
                  <DataRow key={r}>
                    <IndexCell>{r + 1}</IndexCell>
                    {row.map((value, c) => (
                      <Cell key={c} $selected={c === 2}><CellText>{value}</CellText></Cell>
                    ))}
                  </DataRow>
                ))}
              </tbody>
            </Grid>
          </Workspace>

          <Profiles>
            <Card $width={304}>
              <CardHead>Column statistics<MoreButton aria-label="More"><Dots /></MoreButton></CardHead>
              <CardBody $top={7} $right={8}>
                <StatList>
                  {stats.map(([label, value]) => <li key={label}><span>{label}</span><em>{value}</em></li>)}
                </StatList>
                <Scroller $pad={21}>
                  <Chevron d={up} />
                  <Thumb $height={40} $after={36} />
                  <Chevron d={down} />
                </Scroller>
              </CardBody>
            </Card>
            <Card>
              <CardHead>Value distribution<MoreButton aria-label="More"><Dots /></MoreButton></CardHead>
              <CardBody $top={10} $right={14}>
                <Distribution>
                  <DistributionRows>
                    {rows.map((row) => <li key={row[2]}><BarLabel>{row[2]}</BarLabel><WideBar /></li>)}
                  </DistributionRows>
                </Distribution>
                <Scroller $pad={22}>
                  <Chevron d={up} />
                  <Thumb $height={54} $after={18} />
                  <Chevron d={down} />
                </Scroller>
              </CardBody>
            </Card>
          </Profiles>
        </Center>

        <Settings>
          <PaneHeader $right={32}>
            <PaneTitle>Query Settings</PaneTitle>
            <button aria-label="Close settings"><Cross size={14} /></button>
          </PaneHeader>
          <SectionTitle>
            <svg width="7" height="7" viewBox="0 0 7 7"><path d="M7 0v7H0z" fill="#555" /></svg>
            PROPERTIES
          </SectionTitle>
          <NameInput aria-label="Query name" />
          <StepList>
            {steps.map(([name, gear, active], i) => (
              <Step key={i} $active={active}>
                {name}
                {gear ? <StepGear aria-label="Step settings"><Gear /></StepGear> : null}
              </Step>
            ))}
          </StepList>
        </Settings>
      </Main>

      <StatusBar>
        <span>5 COLUMNS, 6 ROWS</span>
        <span>Column profiling based on top 1000 rows</span>
        <StatusRight>PREVIEW DOWNLOADED AT 17:56</StatusRight>
      </StatusBar>

      <Taskbar>
        <Weather aria-label="Weather">
          <svg width="32" height="32" viewBox="0 0 32 32">
            <path d="M5 19c6 2 13-1 15-7 6 2 9 6 8 10-3 8-12 9-18 6-3-2-5-5-5-9z" fill="#f08a24" />
            <path d="M5 14a4 4 0 0 1 0-7c1-5 9-5 10 0 5 0 6 7 1 7z" fill="#a9c5f2" />
          </svg>
          <Badge>9</Badge>
        </Weather>
        <TaskButton aria-label="Start">
          <TaskSvg>
            <defs><linearGradient id="win" x2="1" y2="1"><stop stopColor="#4ccbff" /><stop offset="1" stopColor="#0067c8" /></linearGradient></defs>
            <path d="M1 1h13.500v13.500H1zM15.500 1H29v13.500H15.500zM1 15.500h13.500V29H1zM15.500 15.500H29V29H15.500z" fill="url(#win)" />
          </TaskSvg>
        </TaskButton>
        <SearchBox>
          <svg width="18" height="19" viewBox="0 0 18 19" fill="none" stroke="#222" strokeWidth="2.200"><circle cx="8" cy="7.500" r="6.500" /><path d="m12.500 12.500 5 5.500" /></svg>
          <SearchInput placeholder="Search" aria-label="Search" />
        </SearchBox>
        {apps.map(([name, icon, running, active]) => (
          <TaskButton key={name} aria-label={name} $running={running} $active={active}>
            {icon}
            {name === "WhatsApp" && <Badge $blue>99+</Badge>}
          </TaskButton>
        ))}
        <Tray>
          <TrayButton aria-label="Hidden icons" $after={21}><Chevron d={up} w={14} h={10} color="#222" width={1.8} /></TrayButton>
          <TrayButton aria-label="OneDrive" $after={14}>
            <svg width="22" height="18" viewBox="0 0 22 18"><path d="M5 14C0 14-.5 7 4 6.500 5 0 14-.5 16 5c4 0 5 3 4 6L12 14z" fill="#9a9a9a" stroke="#222" strokeWidth="1.200" /><circle cx="15.500" cy="12.500" r="5.500" fill="#fff" /><path d="M12 12a3.600 3.600 0 0 1 6.500-1.500M19 13a3.600 3.600 0 0 1-6.500 1.500M18.800 8v3h-3M12.200 17v-3h3" fill="none" stroke="#1769c9" strokeWidth="1.500" /></svg>
          </TrayButton>
          <TrayText $width={48} $size={14} $align="center" $after={13}>ENG<br />IN</TrayText>
          <TrayButton aria-label="Network" $after={10}>
            <svg width="20" height="16" viewBox="0 0 20 16" fill="none" stroke="#222" strokeWidth="1.500"><path d="M1 6c5-6 13-6 18 0M4 9c3.500-4 8.500-4 12 0M6.800 11.800c2-2 4.500-2 6.500 0" /><circle cx="10" cy="14" r="1.300" fill="#222" /></svg>
          </TrayButton>
          <TrayButton aria-label="Volume" $after={10}>
            <svg width="20" height="16" viewBox="0 0 20 16" fill="none" stroke="#222" strokeWidth="1.200"><path d="M1 5.500h3L8.500 1.500v13L4 10.500H1zM11 5.500c1.300 1.500 1.300 3.500 0 5M13.500 3.500c2.300 2.500 2.300 6.500 0 9M16 1.500c3.500 4 3.500 9 0 13" /></svg>
          </TrayButton>
          <TrayButton aria-label="Battery" $after={0}>
            <svg width="20" height="16" viewBox="0 0 20 16"><path d="M3 5h13v8H3z" fill="#222" /><path d="M6 3.500h10.500a1 1 0 0 1 1 1v9a1 1 0 0 1-1 1H2.500a1 1 0 0 1-1-1V9" fill="none" stroke="#222" /><path d="M18 7h2v4h-2z" fill="#222" /><path d="M4.500-1 0 6h3l-1 4 4.500-5.500H4z" fill="#222" stroke="#e2e9bb" strokeWidth=".8" /></svg>
          </TrayButton>
          <TrayText $width={97} $size={15} $align="right" $after={0}>22:43<br />05-05-2025</TrayText>
        </Tray>
      </Taskbar>

      <Dialog onSubmit={(e) => e.preventDefault()}>
        <DialogClose type="button" aria-label="Close dialog"><Cross size={15} color="#8a8886" /></DialogClose>
        <DialogTitle>Split Column by Number of Characters</DialogTitle>
        <DialogText>Specify the number of characters used to split the text column.</DialogText>
        <FieldLabel htmlFor="chars">Number of characters</FieldLabel>
        <NumberInput id="chars" defaultValue="3" />
        <Options>
          <Legend>Split</Legend>
          {splitModes.map((mode, i) => (
            <Option key={mode}>
              <Radio type="radio" name="split" defaultChecked={i === 0} />
              <OptionText $focused={i === 0}>{mode}</OptionText>
            </Option>
          ))}
        </Options>
        <Advanced type="button">
          <svg width="6" height="11" viewBox="0 0 6 11" fill="none" stroke="#777"><path d="M.5 1v9l5-4.500z" /></svg>
          Advanced options
        </Advanced>
        <Actions>
          <ActionButton $primary>OK</ActionButton>
          <ActionButton type="button">Cancel</ActionButton>
        </Actions>
      </Dialog>
    </Shell>
  );
}
